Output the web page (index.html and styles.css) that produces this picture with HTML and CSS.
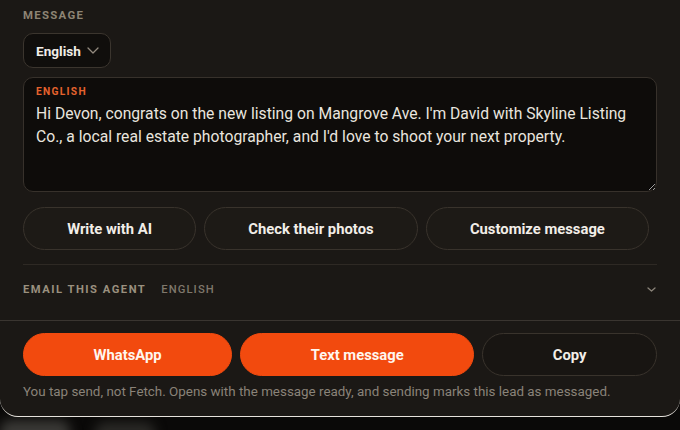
FILE: index.html
```html
<!DOCTYPE html>
<html lang="en">
<head>
<meta charset="utf-8">
<title>Message</title>
<link rel="stylesheet" href="styles.css">
</head>
<body>
<div class="page">
  <div class="backdrop">
    <span class="blur blur-a"></span>
    <span class="blur blur-b"></span>
  </div>
  <section class="panel">
    <div class="panel-body">
      <div class="section-label">Message</div>
      <button class="lang-select" type="button">
        <span>English</span>
        <svg class="chev" width="12" height="7" viewBox="0 0 12 7"><path d="M1 1l5 5 5-5" fill="none" stroke="currentColor" stroke-width="1.3" stroke-linecap="round" stroke-linejoin="round"/></svg>
      </button>
      <div class="editor">
        <span class="editor-label">English</span>
        <textarea class="editor-text">Hi Devon, congrats on the new listing on Mangrove Ave. I'm David with Skyline Listing Co., a local real estate photographer, and I'd love to shoot your next property.</textarea>
      </div>
      <div class="actions">
        <button class="pill" type="button">Write with AI</button>
        <button class="pill" type="button">Check their photos</button>
        <button class="pill" type="button">Customize message</button>
      </div>
      <div class="email-row">
        <span class="email-title">Email this agent</span>
        <span class="email-lang">English</span>
        <svg class="email-chev" width="9" height="5" viewBox="0 0 9 5"><path d="M1 1l3.5 3 3.5-3" fill="none" stroke="currentColor" stroke-width="1.3" stroke-linecap="round" stroke-linejoin="round"/></svg>
      </div>
    </div>
    <div class="panel-footer">
      <div class="send-row">
        <button class="send primary" type="button">WhatsApp</button>
        <button class="send primary" type="button">Text message</button>
        <button class="send secondary" type="button">Copy</button>
      </div>
      <p class="note">You tap send, not Fetch. Opens with the message ready, and sending marks this lead as messaged.</p>
    </div>
  </section>
</div>
</body>
</html>
```

FILE: styles.css
```css
* { box-sizing: border-box; }

html, body {
  margin: 0;
  padding: 0;
  background: #0a0908;
  width: 680px;
  height: 430px;
  overflow: hidden;
  font-family: Roboto, "Liberation Sans", sans-serif;
}

.page {
  position: relative;
  width: 680px;
  height: 430px;
}

.backdrop {
  position: absolute;
  left: 0;
  right: 0;
  bottom: 0;
  height: 30px;
  overflow: hidden;
}

.blur {
  position: absolute;
  border-radius: 10px;
  filter: blur(6px);
}

.blur-a {
  left: 0;
  top: 20px;
  width: 70px;
  height: 30px;
  background: #3a3936;
}

.blur-b {
  left: 95px;
  top: 22px;
  width: 60px;
  height: 30px;
  background: #2a2926;
}

.panel {
  position: relative;
  width: 680px;
  background: #1b1815;
  border-bottom: 1.5px solid #e6e2dc;
  border-radius: 0 0 18px 18px;
}

.panel-body {
  padding: 8px 23px 0;
}

.section-label {
  font-size: 11.4px;
  line-height: 14px;
  font-weight: 700;
  letter-spacing: 1.3px;
  text-transform: uppercase;
  color: #8d8474;
}

.lang-select {
  margin-top: 11px;
  height: 35px;
  display: inline-flex;
  align-items: center;
  gap: 6px;
  padding: 0 11px 0 12px;
  background: #100e0c;
  border: 1px solid #3b352e;
  border-radius: 10px;
  color: #f1ede7;
  font-family: inherit;
  font-size: 13.6px;
  font-weight: 700;
}

.lang-select .chev {
  color: #948b80;
}

.editor {
  position: relative;
  margin-top: 9px;
}

.editor-label {
  position: absolute;
  left: 13px;
  top: 9px;
  font-size: 10.2px;
  line-height: 12px;
  font-weight: 700;
  letter-spacing: 1.3px;
  text-transform: uppercase;
  color: #e5622d;
}

.editor-text {
  display: block;
  width: 100%;
  height: 115px;
  padding: 24px 13px 8px 12px;
  background: #0e0c0a;
  border: 1px solid #37312b;
  border-radius: 10px;
  color: #e9e5df;
  font-family: inherit;
  font-size: 15.7px;
  line-height: 23px;
  resize: vertical;
  color-scheme: dark;
  outline: none;
}

.actions {
  display: flex;
  gap: 8px;
  margin-top: 15px;
  margin-right: 8px;
}

.pill {
  flex: 1 1 auto;
  height: 43px;
  padding: 0 14px;
  background: #1d1a16;
  border: 1px solid #39332c;
  border-radius: 22px;
  color: #f2eee8;
  font-family: inherit;
  font-size: 14.8px;
  font-weight: 700;
}

.email-row {
  margin-top: 14px;
  border-top: 1px solid #2e2924;
  height: 56px;
  padding-bottom: 6px;
  display: flex;
  align-items: center;
  font-size: 11.2px;
  font-weight: 700;
  letter-spacing: 1.5px;
  text-transform: uppercase;
}

.email-title {
  color: #9a907f;
}

.email-lang {
  margin-left: 15px;
  color: #7f776b;
  font-weight: 500;
  letter-spacing: 1.1px;
}

.email-chev {
  margin-left: auto;
  margin-right: 1px;
  color: #8a8379;
}

.panel-footer {
  border-top: 1px solid #3a3530;
  padding: 12px 23px 16px;
}

.send-row {
  display: flex;
  gap: 8px;
}

.send {
  flex: 1 1 auto;
  height: 43px;
  padding: 0 16px;
  border-radius: 22px;
  font-family: inherit;
  font-size: 14.8px;
  font-weight: 700;
  color: #fff6ef;
}

.send.primary {
  background: #f24a0e;
  border: 1px solid #f24a0e;
}

.send.secondary {
  background: #181512;
  border: 1px solid #39332c;
  color: #f2eee8;
}

.note {
  margin: 8px 0 0;
  font-size: 13.4px;
  line-height: 16px;
  color: #8a8379;
}
```
